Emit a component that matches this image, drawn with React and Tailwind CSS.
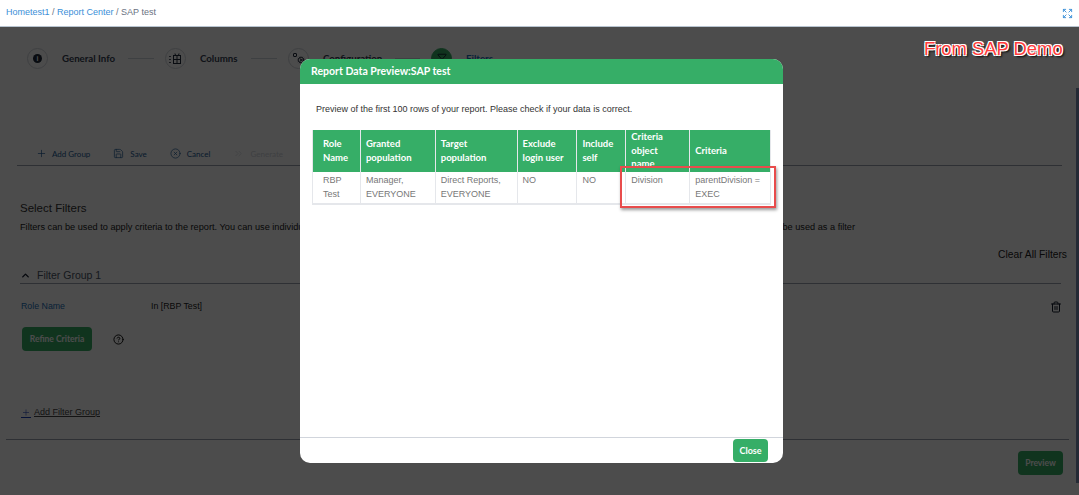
import { Plus, Save, CircleX, ChevronsRight, ChevronUp, CircleHelp, Trash2, Expand, Filter, Cog } from "lucide-react"

const columns = [
    { label: ["Role", "Name"], width: "w-[48px]", pad: "pl-[10px]", cells: ["RBP", "Test"] },
    { label: ["Granted", "population"], width: "w-[75px]", pad: "pl-[5px]", cells: ["Manager,", "EVERYONE"] },
    { label: ["Target", "population"], width: "w-[82px]", pad: "pl-[5px]", cells: ["Direct Reports,", "EVERYONE"] },
    { label: ["Exclude", "login user"], width: "w-[60px]", pad: "pl-[5px]", cells: ["NO"] },
    { label: ["Include", "self"], width: "w-[49px]", pad: "pl-[5px]", cells: ["NO"] },
    { label: ["Criteria", "object", "name"], width: "w-[64px]", pad: "pl-[5px]", cells: ["Division"] },
    { label: ["Criteria"], width: "w-[81px]", pad: "pl-[5px]", cells: ["parentDivision =", "EXEC"] },
]

function ColumnsIcon() {
    return (
        <svg width="13" height="13" viewBox="0 0 13 13" fill="none" stroke="currentColor" strokeWidth="1">
            <rect x="4.5" y="3.5" width="7" height="8" />
            <path d="M4.5 7.5h7M8 3.5v8M6.5 3.5 6 1.5M9.5 3.5l.5-2" />
            <path d="M1 4v1M1 7v1M1 10v1" strokeWidth="1.5" />
        </svg>
    )
}

function ConfigIcon() {
    return (
        <span className="flex items-start">
            <span className="mt-[1px] size-[4px] rounded-[1px] border border-current" />
            <Cog size={8} strokeWidth={2} className="mt-[4px]" />
        </span>
    )
}

function Step({ icon, label, labelWidth, lineWidth, filled }) {
    return (
        <>
            <div className={"flex size-[21px] shrink-0 items-center justify-center rounded-full border " + (filled ? "border-[#36ae67] bg-[#36ae67] text-gray-900" : "border-gray-300 text-gray-800")}>
                {icon}
            </div>
            <span className={"ml-[14px] whitespace-nowrap font-['Lato',sans-serif] text-[9.7px] font-bold " + labelWidth + (filled ? " text-[#1b6fb8]" : " text-gray-700")}>{label}</span>
            {lineWidth && <span className={"ml-[13px] mr-[11px] h-px bg-gray-300 " + lineWidth} />}
        </>
    )
}

function PageBehind() {
    return (
        <div className="flex h-[468px] flex-col bg-white font-['Liberation_Sans',sans-serif]">
            <div className="ml-[27px] mt-[7px] flex h-[48px] items-center">
                <Step
                    label="General Info"
                    labelWidth="w-[53px]"
                    lineWidth="w-[26px]"
                    icon={<span className="flex size-[9px] items-center justify-center rounded-full bg-gray-800 text-[7px] font-bold leading-none text-white">i</span>}
                />
                <Step label="Columns" labelWidth="w-[38px]" lineWidth="w-[26px]" icon={<ColumnsIcon />} />
                <Step label="Configuration" labelWidth="w-[59px]" lineWidth="w-[25px]" icon={<ConfigIcon />} />
                <Step label="Filters" labelWidth="w-[30px]" filled icon={<Filter size={10} strokeWidth={2} />} />
            </div>
            <div className="mx-[17px] mt-[60px] flex h-[24px] items-center gap-[23px] border-b border-gray-400 pl-[19px] font-['Lato',sans-serif] text-[8px] text-[#1b5a96]">
                <span className="flex items-center gap-[5px]"><Plus size={11} strokeWidth={1.5} />Add Group</span>
                <span className="flex items-center gap-[6px]"><Save size={11} strokeWidth={1.5} />Save</span>
                <span className="flex items-center gap-[6px]"><CircleX size={11} strokeWidth={1.5} />Cancel</span>
                <span className="flex items-center gap-[6px] text-gray-300"><ChevronsRight size={11} strokeWidth={1.5} />Generate</span>
            </div>
            <div className="ml-[20px] mt-[34px] text-[11.5px] leading-[16px] text-[#333]">Select Filters</div>
            <div className="ml-[20px] mt-[4px] flex w-[835px] justify-between text-[9.2px] leading-[14px] text-[#222]">
                <span>Filters can be used to apply criteria to the report. You can use individual</span>
                <span>be used as a filter</span>
            </div>
            <div className="mr-[12px] mt-[14px] text-right text-[10.25px] leading-[14px] text-[#222]">Clear All Filters</div>
            <div className="ml-[20px] mr-[18px] mt-[6px] flex h-[16px] items-center border-b border-gray-400 text-[10.5px] text-gray-600">
                <ChevronUp size={11} strokeWidth={3} className="text-gray-900" />
                <span className="ml-[6px]">Filter Group 1</span>
            </div>
            <div className="ml-[21px] mr-[17px] mt-[16px] flex h-[14px] items-center text-[8.8px]">
                <span className="w-[130px] text-[#1b6fb8]">Role Name</span>
                <span className="text-[#222]">In [RBP Test]</span>
                <Trash2 size={12} className="ml-auto text-gray-900" />
            </div>
            <div className="ml-[22px] mt-[13px] flex items-center">
                <div className="flex h-[24px] w-[70px] items-center justify-center rounded-[4px] bg-[#36ae67] font-['Lato',sans-serif] text-[8.5px] font-bold text-white">Refine Criteria</div>
                <CircleHelp size={11} strokeWidth={2} className="ml-[21px] text-black" />
            </div>
            <div className="ml-[21px] mt-[55px] flex h-[14px] items-center gap-[3px] text-[9px] text-[#444]">
                <Plus size={10} strokeWidth={1.5} className="border-b border-blue-800 text-blue-800" />
                <span className="underline">Add Filter Group</span>
            </div>
            <div className="ml-[6px] mr-[10px] mt-[19px] h-[28px] border-t border-gray-400" />
            <div className="-mt-[16px] mr-[16px] flex justify-end">
                <div className="flex h-[24px] w-[45px] items-center justify-center rounded-[4px] bg-[#36ae67] font-['Lato',sans-serif] text-[8.5px] font-bold text-white">Preview</div>
            </div>
        </div>
    )
}

function PreviewModal() {
    return (
        <div className="absolute left-[300px] top-[59px] flex h-[404px] w-[483px] flex-col overflow-hidden rounded-[10px] bg-white font-['Liberation_Sans',sans-serif]">
            <div className="flex h-[25px] shrink-0 items-center bg-[#36ae67] pl-[11px] font-['Lato',sans-serif] text-[10.5px] font-bold text-white">
                Report Data Preview:SAP test
            </div>
            <div className="flex-1 pl-[12px]">
                <p className="ml-[4px] mt-[19px] text-[9px] leading-[12px] text-[#333]">
                    Preview of the first 100 rows of your report. Please check if your data is correct.
                </p>
                <div className="mt-[15px] flex w-[459px] border-b-2 border-r border-gray-200">
                    {columns.map((col) => (
                        <div key={col.label.join(" ")} className={col.width + " border-l border-gray-200"}>
                            <div className={col.pad + " flex h-[42px] flex-col justify-center overflow-hidden bg-[#36ae67] pb-[1px] font-['Lato',sans-serif] text-[9.5px] font-bold leading-[13.5px] text-white"}>
                                {col.label.map((line) => <div key={line}>{line}</div>)}
                            </div>
                            <div className={col.pad + " h-[31px] pt-[1px] text-[9px] leading-[14px] text-[#777]"}>
                                {col.cells.map((line) => <div key={line}>{line}</div>)}
                            </div>
                        </div>
                    ))}
                </div>
            </div>
            <div className="flex h-[26px] shrink-0 items-center justify-end border-t border-gray-300 pr-[15px]">
                <div className="flex h-[23px] w-[35px] items-center justify-center rounded-[4px] bg-[#36ae67] font-['Lato',sans-serif] text-[9px] font-bold text-white">Close</div>
            </div>
        </div>
    )
}

export default function App() {
    return (
        <div className="relative h-[495px] w-[1079px] overflow-hidden bg-white">
            <div className="flex h-[27px] items-center justify-between border-b border-[#b8c4d0] pl-[6px] pr-[6px] font-['Liberation_Sans',sans-serif] text-[9px] text-gray-500">
                <div>
                    <span className="text-[#3b8fd8]">Hometest1</span> / <span className="text-[#3b8fd8]">Report Center</span> / SAP test
                </div>
                <Expand size={11} className="text-[#3b8fd8]" />
            </div>
            <PageBehind />
            <div className="absolute inset-x-0 bottom-0 top-[27px] bg-black/70" />
            <div className="absolute bottom-[12px] right-0 top-[88px] w-[3px] bg-[#252a35]" />
            <PreviewModal />
            {/* red highlight drawn over the last two columns */}
            <div className="absolute left-[620px] top-[166px] h-[42px] w-[156px] border-2 border-[#e84c4c] shadow-[1px_2px_3px_rgba(0,0,0,0.4)]" />
            <div className="absolute left-[924px] top-[39px] font-['Liberation_Sans',sans-serif] text-[18.4px] leading-[20px] text-[#ff3b3b] [text-shadow:1px_1px_0_#fff,-1px_-1px_0_#fff,1px_-1px_0_#fff,-1px_1px_0_#fff,2px_2px_2px_#000]">
                From SAP Demo
            </div>
        </div>
    )
}
